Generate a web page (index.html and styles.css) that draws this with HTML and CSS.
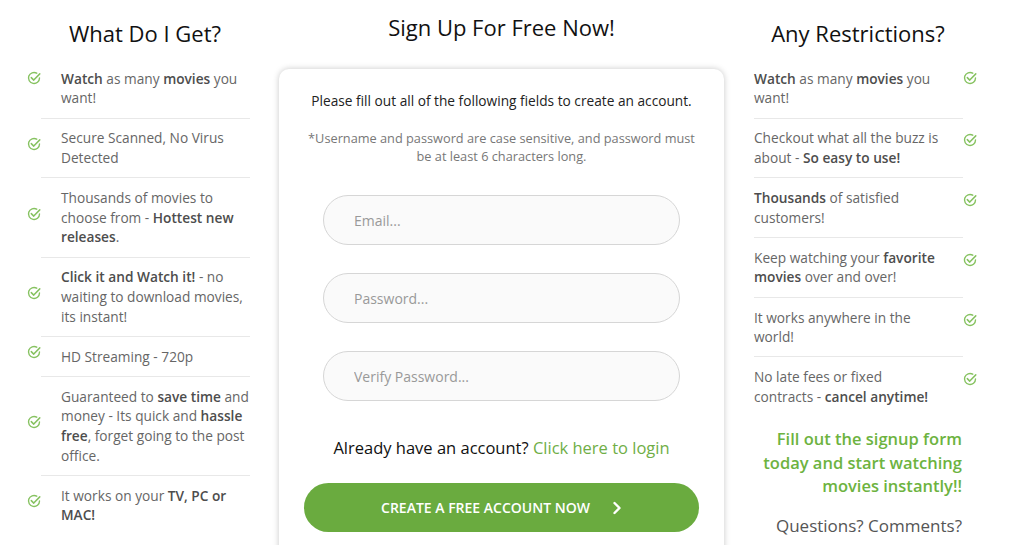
FILE: index.html
```html
<!DOCTYPE html>
<html lang="en">
<head>
<meta charset="utf-8">
<title>Sign Up</title>
<link rel="stylesheet" href="styles.css">
</head>
<body>
<svg width="0" height="0" class="defs">
  <defs>
    <symbol id="chk" viewBox="0 0 16 16">
      <path d="M14.3 8 A6.3 6.3 0 1 1 11.15 2.54" fill="none" stroke="currentColor" stroke-width="1.6" stroke-linecap="round"/>
      <path d="M4.9 7.6 L7.7 10.4 L14.6 3.3" fill="none" stroke="currentColor" stroke-width="1.7" stroke-linecap="round" stroke-linejoin="round"/>
    </symbol>
  </defs>
</svg>
<div class="page">
  <section class="col col-left">
    <h2 class="side-title">What Do I Get?</h2>
    <ul class="list list-left">
      <li><svg class="check"><use href="#chk"/></svg><span class="txt"><b>Watch</b> as many <b>movies</b> you want!</span></li>
      <li><svg class="check"><use href="#chk"/></svg><span class="txt">Secure Scanned, No Virus Detected</span></li>
      <li><svg class="check"><use href="#chk"/></svg><span class="txt">Thousands of movies to choose from - <b>Hottest new releases</b>.</span></li>
      <li><svg class="check"><use href="#chk"/></svg><span class="txt"><b>Click it and Watch it!</b> - no waiting to download movies, its instant!</span></li>
      <li><svg class="check"><use href="#chk"/></svg><span class="txt">HD Streaming - 720p</span></li>
      <li><svg class="check"><use href="#chk"/></svg><span class="txt">Guaranteed to <b>save time</b> and money - Its quick and <b>hassle free</b>, forget going to the post office.</span></li>
      <li><svg class="check"><use href="#chk"/></svg><span class="txt">It works on your <b>TV, PC or MAC!</b></span></li>
    </ul>
  </section>

  <section class="col col-center">
    <h1 class="main-title">Sign Up For Free Now!</h1>
    <div class="card">
      <p class="intro">Please fill out all of the following fields to create an account.</p>
      <p class="note">*Username and password are case sensitive, and password must be at least 6 characters long.</p>
      <form class="form">
        <input class="field" type="email" placeholder="Email...">
        <input class="field" type="password" placeholder="Password...">
        <input class="field" type="password" placeholder="Verify Password...">
        <p class="login">Already have an account? <a href="#">Click here to login</a></p>
        <button class="cta" type="button"><span>CREATE A FREE ACCOUNT NOW</span>
          <svg class="chev" viewBox="0 0 10 14"><path d="M2.5 2 L7.5 7 L2.5 12" fill="none" stroke="currentColor" stroke-width="2.4" stroke-linecap="round" stroke-linejoin="round"/></svg>
        </button>
      </form>
    </div>
  </section>

  <section class="col col-right">
    <h2 class="side-title">Any Restrictions?</h2>
    <ul class="list list-right">
      <li><span class="txt"><b>Watch</b> as many <b>movies</b> you want!</span><svg class="check"><use href="#chk"/></svg></li>
      <li><span class="txt">Checkout what all the buzz is about - <b>So easy to use!</b></span><svg class="check"><use href="#chk"/></svg></li>
      <li><span class="txt"><b>Thousands</b> of satisfied customers!</span><svg class="check"><use href="#chk"/></svg></li>
      <li><span class="txt">Keep watching your <b>favorite movies</b> over and over!</span><svg class="check"><use href="#chk"/></svg></li>
      <li><span class="txt">It works anywhere in the world!</span><svg class="check"><use href="#chk"/></svg></li>
      <li><span class="txt">No late fees or fixed contracts - <b>cancel anytime!</b></span><svg class="check"><use href="#chk"/></svg></li>
    </ul>
    <p class="promo">Fill out the signup form today and start watching movies instantly!!</p>
    <p class="questions">Questions? Comments?</p>
  </section>
</div>
</body>
</html>
```

FILE: styles.css
```css
* { box-sizing: border-box; }

html, body {
  margin: 0;
  padding: 0;
  background: #fff;
  font-family: "Open Sans", "Liberation Sans", Arial, sans-serif;
  color: #666;
}

.defs { position: absolute; width: 0; height: 0; overflow: hidden; }

.page {
  display: grid;
  grid-template-columns: 250px 445px 250px;
  column-gap: 9px;
  padding-left: 20px;
  height: 545px;
  overflow: hidden;
}

.side-title {
  margin: 18px 0 0;
  font-size: 22px;
  line-height: 30px;
  font-weight: 400;
  color: #111;
  text-align: center;
  height: 41px;
}

.list {
  list-style: none;
  margin: 0;
  padding: 0;
  font-size: 13.7px;
  line-height: 19.6px;
}

.list li {
  display: flex;
  align-items: center;
  width: 209px;
  padding: 9.75px 0;
  border-bottom: 1px solid #e8e8e8;
}

.list li:last-child { border-bottom: none; }

.list b { font-weight: 600; color: #4d4d4d; }

.check {
  flex: none;
  width: 14px;
  height: 14px;
  color: #86c260;
}

.list-left { margin-left: 21px; }
.list-left .check { margin-left: -14px; margin-right: 20px; transform: translateY(-4px); }
.list-left li:first-child .check { align-self: flex-start; margin-top: 2px; transform: none; }
.list-left .txt { flex: 1; }

.list-right { margin-left: 21px; }
.list-right .txt { flex: 1; }
.list-right .check { align-self: flex-start; margin-top: 5px; margin-left: 20px; margin-right: -14px; }
.list-right li:first-child .check { margin-top: 2px; }

.main-title {
  margin: 12px 0 0;
  font-size: 22px;
  line-height: 30px;
  font-weight: 400;
  color: #111;
  text-align: center;
  height: 27px;
}

.card {
  margin-top: 30px;
  height: 520px;
  background: #fff;
  border-radius: 10px;
  box-shadow: 0 0 6px rgba(0, 0, 0, 0.22);
  padding: 22px 24px 0;
  text-align: center;
}

.intro {
  margin: 0;
  font-size: 13.7px;
  line-height: 20px;
  color: #222;
}

.note {
  margin: 18px 0 0;
  font-size: 12.75px;
  line-height: 18px;
  color: #777;
}

.form {
  display: flex;
  flex-direction: column;
  align-items: center;
  margin-top: 30px;
}

.field {
  width: 357px;
  height: 50px;
  margin-bottom: 28px;
  border: 1px solid #d6d6d6;
  border-radius: 25px;
  background: #fafafa;
  padding: 0 30px;
  font-family: inherit;
  font-size: 14px;
  color: #333;
  outline: none;
}

.field:last-of-type { margin-bottom: 0; }

.field::placeholder { color: #999; }

.login {
  margin: 35px 0 0;
  font-size: 16.5px;
  line-height: 24px;
  color: #111;
}

.login a {
  color: #6fae46;
  text-decoration: none;
}

.cta {
  margin-top: 23px;
  width: 395px;
  height: 49px;
  border: none;
  border-radius: 25px;
  background: #6aab3f;
  color: #fff;
  font-family: inherit;
  font-size: 14px;
  font-weight: 600;
  display: flex;
  align-items: center;
  justify-content: center;
  gap: 22px;
  padding: 0;
}

.chev { width: 10px; height: 14px; }

.promo {
  margin: 11px 0 0;
  width: 229px;
  text-align: right;
  font-size: 16.5px;
  line-height: 23.5px;
  font-weight: 600;
  color: #6db33f;
}

.questions {
  margin: 16px 0 0;
  width: 229px;
  text-align: right;
  font-size: 17px;
  line-height: 24px;
  font-weight: 400;
  color: #555;
}
```
